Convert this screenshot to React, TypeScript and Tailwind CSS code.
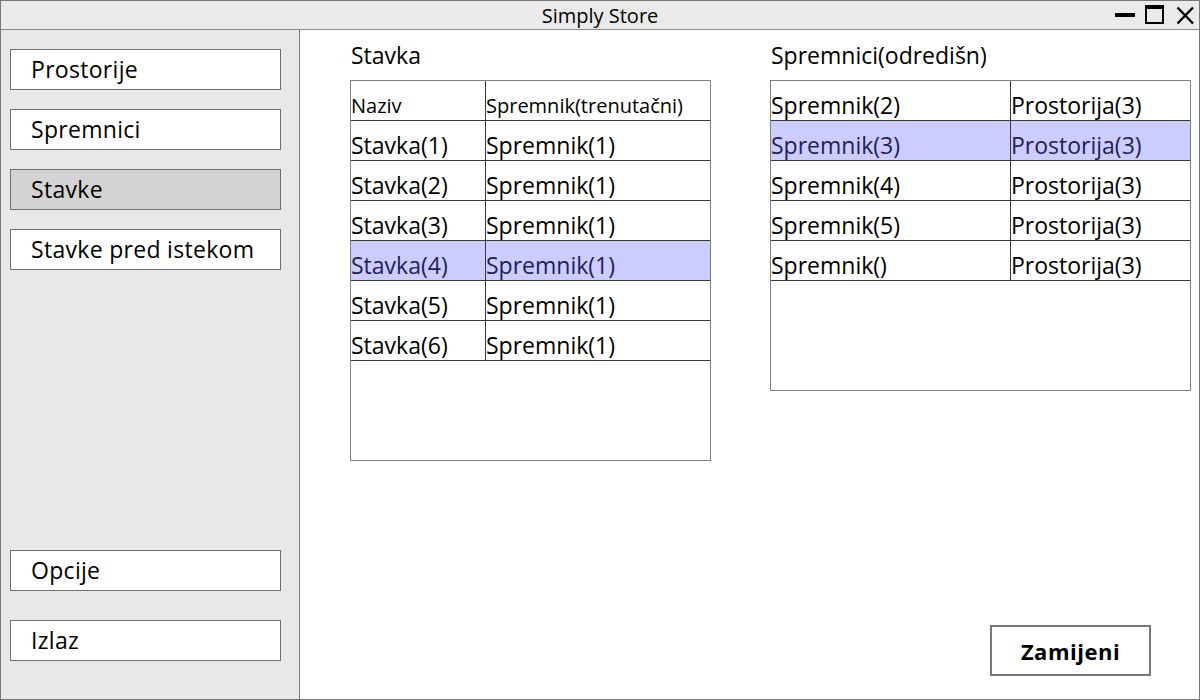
const NAV_TOP = ['Prostorije', 'Spremnici', 'Stavke', 'Stavke pred istekom'];
const NAV_BOTTOM = ['Opcije', 'Izlaz'];

const ITEMS = [
  ['Stavka(1)', 'Spremnik(1)'],
  ['Stavka(2)', 'Spremnik(1)'],
  ['Stavka(3)', 'Spremnik(1)'],
  ['Stavka(4)', 'Spremnik(1)'],
  ['Stavka(5)', 'Spremnik(1)'],
  ['Stavka(6)', 'Spremnik(1)'],
];

const TARGETS = [
  ['Spremnik(2)', 'Prostorija(3)'],
  ['Spremnik(3)', 'Prostorija(3)'],
  ['Spremnik(4)', 'Prostorija(3)'],
  ['Spremnik(5)', 'Prostorija(3)'],
  ['Spremnik()', 'Prostorija(3)'],
];

function NavButton({ label, active }: { label: string; active?: boolean }) {
  return (
    <button
      className={`w-[271px] h-[41px] ml-[9px] flex items-center pl-[20px] text-[23px] leading-[31px] tracking-[0.3px] text-black border border-[#6f6f6f] ${
        active ? 'bg-[#d3d3d3]' : 'bg-white'
      }`}
    >
      {label}
    </button>
  );
}

interface TableProps {
  rows: string[][];
  header?: string[];
  colWidth: string;
  width: string;
  height: string;
  selected: number;
}

function Table({ rows, header, colWidth, width, height, selected }: TableProps) {
  return (
    <div className={`${width} ${height} border border-[#808080] bg-white flex flex-col`}>
      {header && (
        <div className="h-[40px] border-b border-[#3a3a3a] flex text-[20px] leading-[27px]">
          <div className={`${colWidth} pb-[1px] flex items-end`}>{header[0]}</div>
          <div className="flex-1 border-l border-[#3a3a3a] pb-[1px] flex items-end">{header[1]}</div>
        </div>
      )}
      {rows.map((r, i) => (
        <div
          key={i}
          className={`h-[40px] border-b border-[#3a3a3a] flex text-[23px] leading-[29px] ${
            i === selected ? 'bg-[#ccccff] text-[#1e1e5c]' : 'text-black'
          }`}
        >
          <div className={`${colWidth} flex items-end`}>{r[0]}</div>
          <div className="flex-1 border-l border-[#3a3a3a] flex items-end">{r[1]}</div>
        </div>
      ))}
    </div>
  );
}

function WindowControls() {
  return (
    <svg className="absolute right-0 top-0" width="89" height="28" viewBox="0 0 89 28">
      {/* minimize */}
      <rect x="5" y="12" width="20" height="4" fill="#000" />
      {/* maximize */}
      <rect x="36" y="5" width="17" height="17" fill="none" stroke="#000" strokeWidth="2" />
      <rect x="35" y="4" width="19" height="4" fill="#000" />
      {/* close */}
      <path d="M67.5 6.5 L83 22.5 M83 6.5 L67.5 22.5" stroke="#000" strokeWidth="2.4" />
    </svg>
  );
}

export default function App() {
  return (
    <div className="w-[1200px] h-[700px] border border-[#777] bg-white flex flex-col font-['Open_Sans',sans-serif] text-black overflow-hidden">
      {/* title bar */}
      <div className="h-[29px] shrink-0 bg-[#eaeaea] border-b border-[#888] flex items-center relative">
        <div className="flex-1 text-center text-[20px] leading-[27px]">Simply Store</div>
        <WindowControls />
      </div>

      <div className="flex-1 flex min-h-0">
        {/* sidebar */}
        <aside className="w-[299px] shrink-0 bg-[#e8e8e8] border-r border-[#777] flex flex-col pt-[19px] pb-[38px]">
          <div className="flex flex-col gap-[19px]">
            {NAV_TOP.map((n) => (
              <NavButton key={n} label={n} active={n === 'Stavke'} />
            ))}
          </div>
          <div className="mt-auto flex flex-col gap-[29px]">
            {NAV_BOTTOM.map((n) => (
              <NavButton key={n} label={n} />
            ))}
          </div>
        </aside>

        {/* main */}
        <main className="flex-1 flex flex-col">
          <div className="flex pl-[50px] gap-[59px]">
            <section>
              <div className="h-[50px] pt-[10px] pl-[1px] text-[23px] leading-[30px]">Stavka</div>
              <Table
                rows={ITEMS}
                header={['Naziv', 'Spremnik(trenutačni)']}
                colWidth="w-[134px]"
                width="w-[361px]"
                height="h-[381px]"
                selected={3}
              />
            </section>
            <section>
              <div className="h-[50px] pt-[10px] pl-[1px] text-[23px] leading-[30px]">Spremnici(odredišn)</div>
              <Table
                rows={TARGETS}
                colWidth="w-[239px]"
                width="w-[421px]"
                height="h-[311px]"
                selected={1}
              />
            </section>
          </div>
          <div className="mt-auto flex justify-end pr-[48px] pb-[23px]">
            <button className="w-[161px] h-[51px] border-2 border-[#777] bg-white text-[22px] leading-[30px] font-bold tracking-[0.5px] flex items-center justify-center pt-[1px]">
              Zamijeni
            </button>
          </div>
        </main>
      </div>
    </div>
  );
}
